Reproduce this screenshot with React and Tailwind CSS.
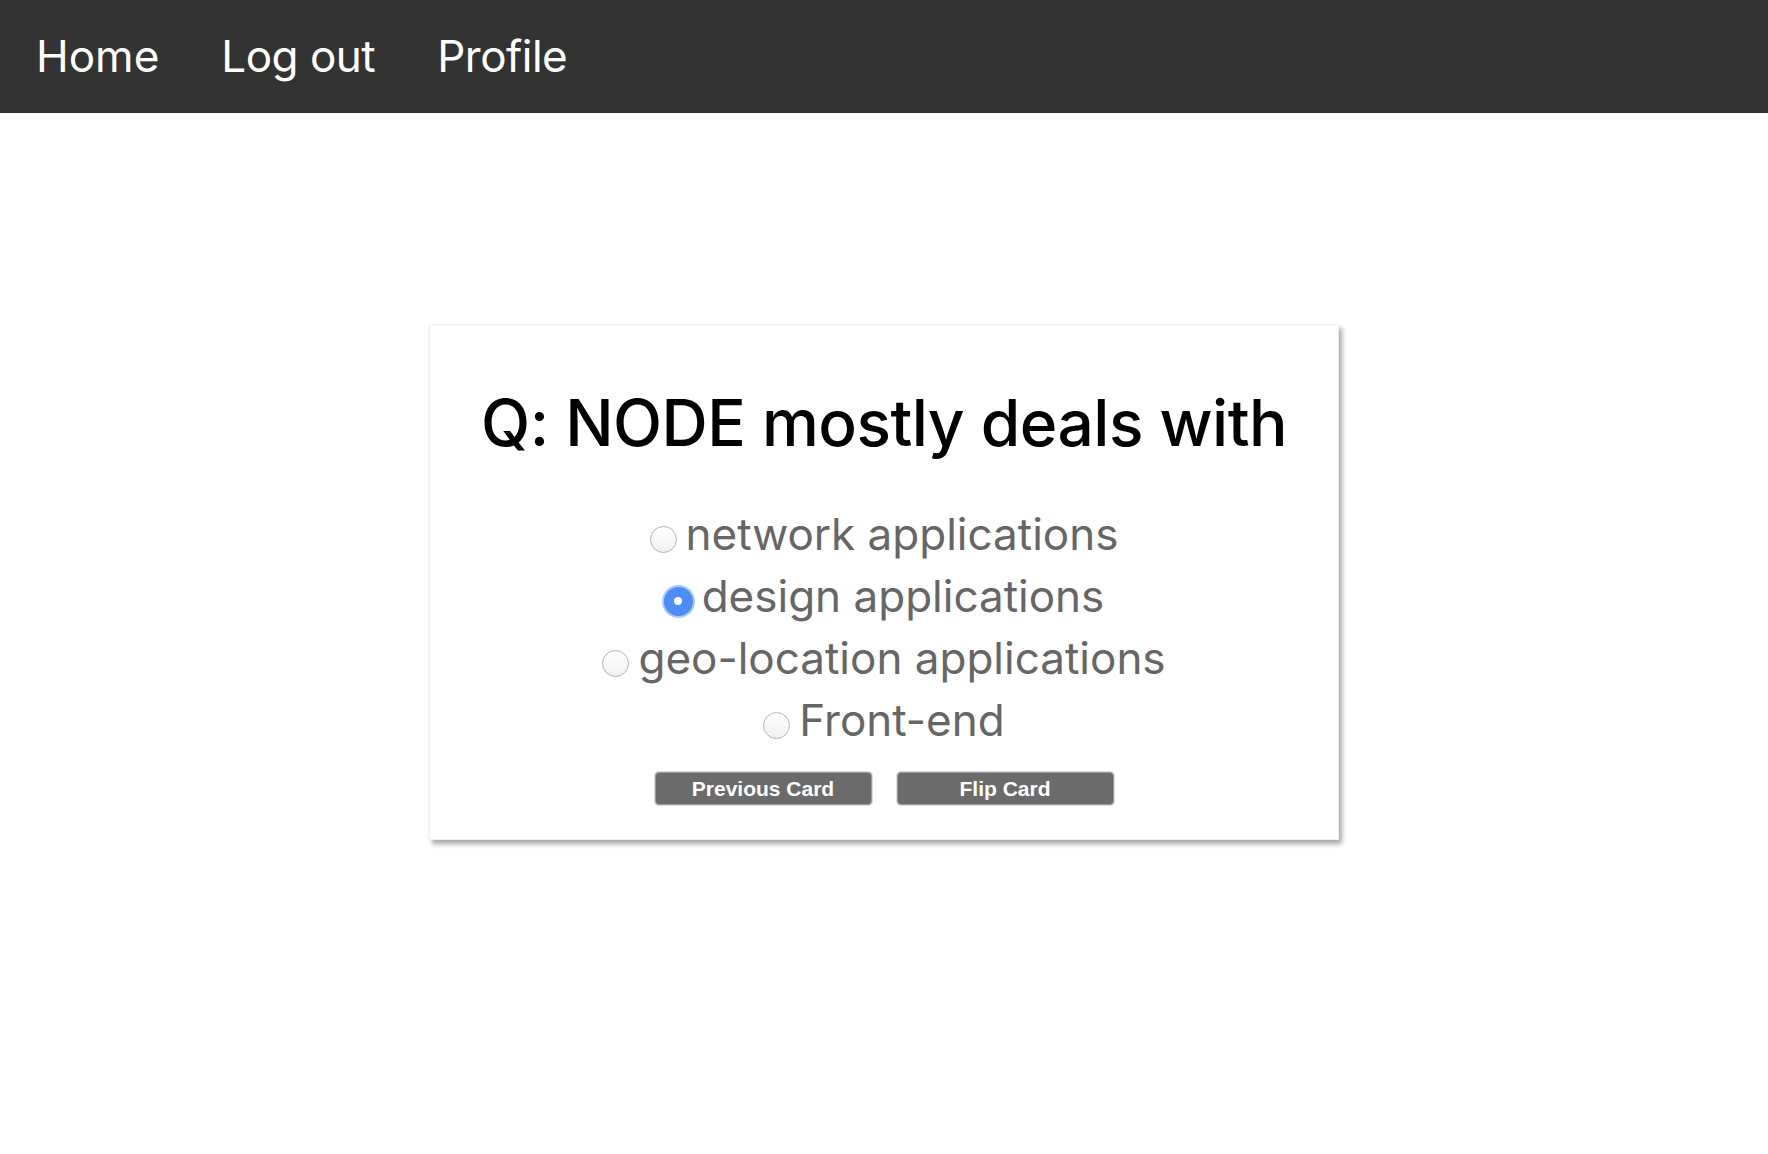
import React from "react";

const options = [
  { label: "network applications", checked: false },
  { label: "design applications", checked: true },
  { label: "geo-location applications", checked: false },
  { label: "Front-end", checked: false },
];

function Radio({ checked }) {
  if (checked) {
    return (
      <span className="relative top-[5px] flex h-[29px] w-[29px] shrink-0 items-center justify-center rounded-full bg-[#4d8ef6] shadow-[0_0_0_2px_#a9c8fb]">
        <span className="h-[8px] w-[8px] rounded-full bg-white" />
      </span>
    );
  }
  return (
    <span className="relative top-[5px] h-[27px] w-[27px] shrink-0 rounded-full border border-[#b3b3b3] bg-gradient-to-b from-white to-[#f1f1f1]" />
  );
}

export default function App() {
  return (
    <div className="min-h-[1154px] bg-white" style={{ fontFamily: "Inter, 'Open Sans', sans-serif" }}>
      <nav className="flex h-[113px] items-center gap-[62px] bg-[#333333] px-[36px] text-[44px] text-white">
        <a className="relative top-[-1px] leading-none">Home</a>
        <a className="relative top-[-1px] leading-none tracking-[-0.5px]">Log out</a>
        <a className="relative top-[-1px] leading-none tracking-[-0.5px]">Profile</a>
      </nav>
      <div className="flex justify-center pt-[211px]">
        <div className="flex w-[910px] flex-col items-center border border-[#f0f0f0] bg-white pb-[34px] pt-[48px] shadow-[3px_4px_5px_rgba(0,0,0,0.35)]">
          <h1 className="text-[64px] font-medium leading-[100px] tracking-[-0.5px] text-black">
            Q: NODE mostly deals with
          </h1>
          <div className="mt-[30px] flex flex-col items-center">
            {options.map((o) => (
              <label key={o.label} className="flex h-[62px] items-center gap-[9px] text-[44px] text-[#666666]">
                <Radio checked={o.checked} />
                <span className="leading-none">{o.label}</span>
              </label>
            ))}
          </div>
          <div className="mt-[21px] flex gap-[25px]" style={{ fontFamily: "'Liberation Sans', Arial, sans-serif" }}>
            <button className="h-[33px] w-[217px] rounded-[4px] border border-[#9c9c9c] bg-[#6b6b6b] text-[21px] font-bold text-white shadow-[0_0_0_1px_#dcdcdc]">
              Previous Card
            </button>
            <button className="h-[33px] w-[217px] rounded-[4px] border border-[#9c9c9c] bg-[#6b6b6b] text-[21px] font-bold text-white shadow-[0_0_0_1px_#dcdcdc]">
              Flip Card
            </button>
          </div>
        </div>
      </div>
    </div>
  );
}
